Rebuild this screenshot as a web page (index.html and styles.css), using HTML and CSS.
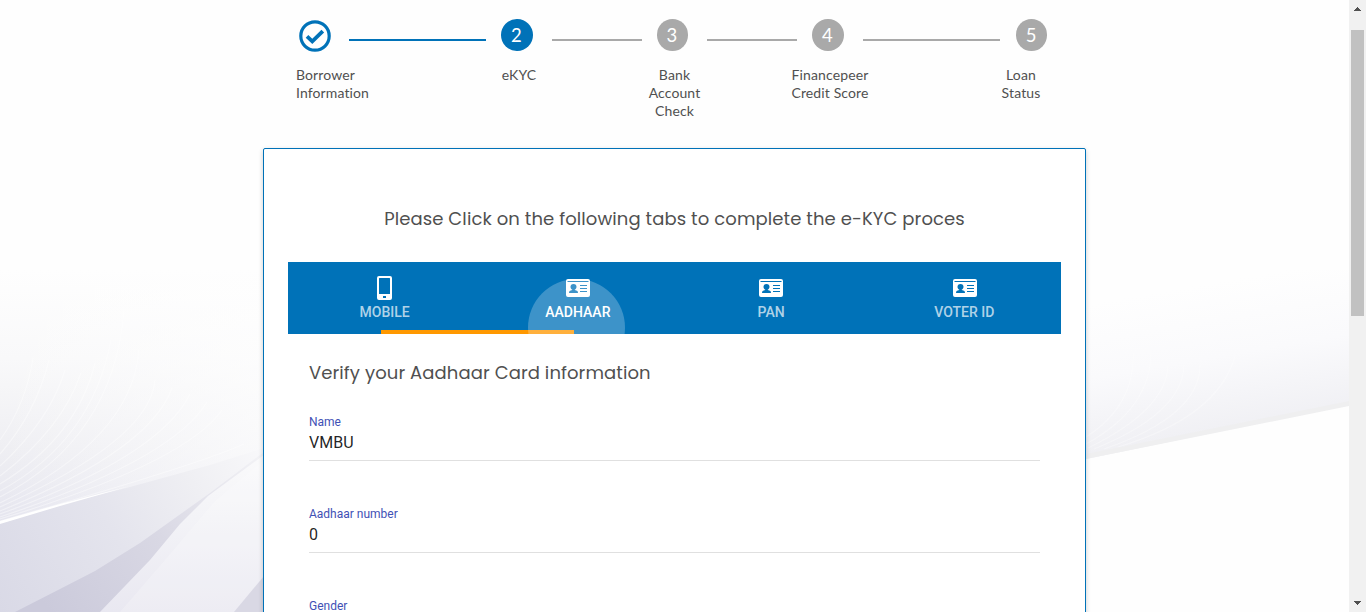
FILE: index.html
```
<!DOCTYPE html>
<html lang="en">
<head>
<meta charset="utf-8">
<title>e-KYC</title>
<link rel="stylesheet" href="styles.css">
</head>
<body>
<div class="page">
  <svg class="backdrop" viewBox="0 0 1349 612" preserveAspectRatio="none" aria-hidden="true">
    <defs>
      <linearGradient id="mist" x1="0" y1="0" x2="0" y2="1"><stop offset="0" stop-color="#fefefe"/><stop offset=".35" stop-color="#f9f9fa"/><stop offset=".7" stop-color="#efeff3"/><stop offset="1" stop-color="#e5e5ef"/></linearGradient>
      <linearGradient id="fade" x1="0" y1="0" x2="1" y2="0"><stop offset="0" stop-color="#fefefe" stop-opacity="0"/><stop offset="1" stop-color="#fefefe" stop-opacity=".7"/></linearGradient>
      <linearGradient id="facet" gradientUnits="userSpaceOnUse" x1="0" y1="612" x2="262" y2="450"><stop offset="0" stop-color="#d9d9e6"/><stop offset=".45" stop-color="#e4e4ed"/><stop offset=".75" stop-color="#efeff3"/><stop offset="1" stop-color="#f8f8fa"/></linearGradient>
      <linearGradient id="blade" gradientUnits="userSpaceOnUse" x1="50" y1="612" x2="264" y2="452"><stop offset="0" stop-color="#cbcadb"/><stop offset=".5" stop-color="#d9d8e4"/><stop offset="1" stop-color="#f3f3f6"/></linearGradient>
      <linearGradient id="pale" x1="0" y1="1" x2="0" y2="0"><stop offset="0" stop-color="#e9e8f1"/><stop offset=".6" stop-color="#f3f3f7"/><stop offset="1" stop-color="#fafafb"/></linearGradient>
      <linearGradient id="right" gradientUnits="userSpaceOnUse" x1="1200" y1="285" x2="1225" y2="430"><stop offset="0" stop-color="#fefefe"/><stop offset=".5" stop-color="#fafafc"/><stop offset="1" stop-color="#f0f0f4"/></linearGradient>
    </defs>
    <path d="M0 270H264V455L0 523Z" fill="url(#mist)"/>
    <path d="M0 270H264V455L0 523Z" fill="url(#fade)"/>
    <g class="mesh">
      <path d="M0 440Q26 404 33 358M0 454Q36 413 49 360M0 466Q50 420 65 370M0 476Q62 429 81 373M0 484Q77 437 95 363M0 491Q92 441 111 340M0 497Q114 438 124 310M0 503Q132 439 139 350M0 507Q150 440 155 380M0 511Q150 450 172 388M0 514Q160 456 190 394M0 517Q173 459 207 402M0 519Q185 463 222 410M0 521Q195 466 244 444"/>
    </g>
    <path d="M0 523L60 505L130 487L210 465L264 448V612H0Z" fill="url(#facet)"/>
    <path d="M0 521L60 504L130 486L60 506L0 524Z" fill="#fff"/>
    <path d="M15 612L60 589L95 571L140 543L210 493L264 452V612Z" fill="url(#blade)"/>
    <path d="M100 612L150 560L180 524L208 496L264 455V612Z" fill="url(#pale)"/>
    <path d="M120 612L165 560L215 501L264 460V612Z" fill="#fff" opacity=".2"/>
    <path d="M234 612L264 576V612Z" fill="#d9d8e4"/>
    <path d="M1086 270H1349V405L1086 459Z" fill="url(#right)"/>
    <g class="mesh faint"><path d="M1086 437Q1136 405 1133 350M1086 444Q1152 408 1151 350M1088 448Q1166 410 1168 366M1094 449Q1183 413 1184 365M1104 449Q1200 416 1200 365M1118 447Q1218 417 1235 356"/></g>
    <path d="M1086 454L1349 401V406L1086 459Z" fill="#efeff0"/>
  </svg>

  <main class="content">
    <ol class="stepper">
      <li class="step done">
        <svg class="check" viewBox="0 0 32 32"><circle cx="16" cy="16" r="14.2"/><path class="tick" d="M8 16.300L13.300 21.300L23.800 11.200"/></svg>
        <span class="label">Borrower<br>Information</span>
      </li>
      <li class="link long active"></li>
      <li class="step current"><span class="dot">2</span><span class="label">eKYC</span></li>
      <li class="link"></li>
      <li class="step third"><span class="dot">3</span><span class="label">Bank<br>Account<br>Check</span></li>
      <li class="link"></li>
      <li class="step"><span class="dot">4</span><span class="label">Financepeer<br>Credit Score</span></li>
      <li class="link long"></li>
      <li class="step last"><span class="dot">5</span><span class="label">Loan<br>Status</span></li>
    </ol>

    <section class="card">
      <h1 class="heading title">Please Click on the following tabs to complete the e-KYC proces</h1>
      <nav class="tabs">
        <a class="tab"><svg class="icon" viewBox="0 0 24 24"><path fill-rule="evenodd" d="M6 0H17Q19 0 19 2V22Q19 24 17 24H6Q4 24 4 22V2Q4 0 6 0ZM6.500 2Q6 2 6 2.500V18H17V2.500Q17 2 16.500 2ZM10 20V22H13V20Z"/></svg><span>MOBILE</span></a>
        <a class="tab selected"><svg class="icon" viewBox="0 0 24 24"><use href="#id-card"/></svg><span>AADHAAR</span></a>
        <a class="tab"><svg class="icon" viewBox="0 0 24 24"><path id="id-card" fill-rule="evenodd" d="M2 3H22Q24 3 24 5V19Q24 21 22 21H2Q0 21 0 19V5Q0 3 2 3ZM1.500 5V6H22.500V5ZM7.500 8C5.500 8 4.500 9.200 4.500 10.700C4.500 12 5.200 13.200 6.200 13.600V14L4 14.700Q3 15.100 3 17H12Q12 15.100 11 14.700L8.800 14V13.600C9.800 13.200 10.500 12 10.500 10.700C10.500 9.200 9.500 8 7.500 8ZM14 9V10H21V9ZM14 12V13H21V12ZM14 15V16H21V15Z"/></svg><span>PAN</span></a>
        <a class="tab voter"><svg class="icon" viewBox="0 0 24 24"><use href="#id-card"/></svg><span>VOTER ID</span></a>
        <i class="ink"></i>
        <i class="ripple"></i>
      </nav>
      <form class="form">
        <h2 class="heading">Verify your Aadhaar Card information</h2>
        <div class="field"><span class="caption">Name</span><span class="value">VMBU</span></div>
        <div class="field"><span class="caption">Aadhaar number</span><span class="value">0</span></div>
        <div class="field"><span class="caption">Gender</span><span class="value"></span></div>
      </form>
    </section>
  </main>

  <aside class="scrollbar">
    <svg class="arrow" viewBox="0 0 17 17" shape-rendering="crispEdges"><path d="M5 11V10H6V9H7V8H8V7H9V8H10V9H11V10H12V11Z"/></svg>
    <div class="thumb"></div>
    <svg class="arrow bottom" viewBox="0 0 17 17" shape-rendering="crispEdges"><path d="M5 6V7H6V8H7V9H8V10H9V9H10V8H11V7H12V6Z"/></svg>
  </aside>
</div>
</body>
</html>
```
FILE: styles.css
```
* { box-sizing: border-box; }
body { margin: 0; background: #fefefe; overflow: hidden; font-family: Roboto, sans-serif; }
.page { position: relative; display: flex; height: 612px; overflow: hidden; }
.backdrop { position: absolute; left: 0; top: 0; width: 1349px; height: 612px; }
.mesh { fill: none; stroke: #fff; stroke-width: 1.2; opacity: .4; }
.mesh.faint { opacity: .3; }
.content { position: relative; width: 1349px; height: 612px; }

.stepper { list-style: none; display: flex; height: 148px; margin: 0; padding: 19px 0 0 296px; }
.step { display: flex; flex-direction: column; align-items: center; flex: none; width: 66px; }
.step.third { width: 65px; }
.step.done { width: 53px; align-items: flex-start; }
.step.last { width: 42px; }
.dot { flex: none; width: 31.5px; height: 32px; margin-right: 4.5px; padding-right: 1px; border-radius: 50%; background: #a9a9a9; color: #fff; font: 18.5px/33px Lato, sans-serif; text-align: center; }
.current .dot { background: #0072b8; }
.last .dot { margin: 0 0 0 21px; }
.check { width: 32px; height: 32px; margin: 1px 0 -1px 3px; fill: none; stroke: #0072b8; stroke-width: 3.2; }
.tick { stroke-width: 3.8; }
.label { margin-top: 15px; color: #505050; font: 14px/18px Lato, sans-serif; letter-spacing: .12px; text-align: center; white-space: nowrap; }
.done .label { text-align: left; }
.link { flex: none; width: 90px; height: 2px; margin-top: 20px; background: #a9a9a9; }
.link.long { width: 137px; }
.link.active { background: #0072b8; }

.card { width: 823px; height: 700px; margin-left: 263px; padding: 55px 24px 0; border: 1px solid #0072b8; border-radius: 2px; background: #fff; box-shadow: 0 2px 5px rgba(0,0,0,.2); }
.heading { margin: 0; color: #505050; font: 400 18px/30px Poppins, Inter, sans-serif; letter-spacing: .09px; white-space: nowrap; }
.title { text-align: center; }
.tabs { position: relative; display: grid; grid-template-columns: repeat(4, 1fr); height: 72px; margin-top: 28px; overflow: hidden; background: #0072b8; }
.tab { display: flex; flex-direction: column; align-items: center; padding-top: 14px; color: rgba(255,255,255,.7); font: 500 14px/24px Roboto, sans-serif; }
.tab.selected { color: #fff; }
.icon { width: 24px; height: 24px; fill: #fff; }
.voter .icon { margin-left: 1px; }
.ink { position: absolute; left: 93px; bottom: 0; width: 193px; height: 4px; background: #ff9800; }
.ripple { position: absolute; left: 240px; top: 17px; width: 97px; height: 97px; border-radius: 50%; background: rgba(255,255,255,.24); }
.form { padding: 24px 21px 0; }
.field { display: flex; flex-direction: column; height: 47px; margin-bottom: 45px; border-bottom: 1px solid #e0e0e0; }
.form .heading { margin-bottom: 26px; }
.caption { color: #3f51b5; font-size: 12px; line-height: 16px; }
.value { margin-top: 1px; color: rgba(0,0,0,.87); font-size: 16px; line-height: 24px; }

.scrollbar { position: relative; display: flex; flex-direction: column; width: 17px; height: 612px; background: #f1f1f1; }
.arrow { width: 17px; height: 17px; fill: #505050; }
.thumb { width: 13px; height: 286px; margin: 13px 2px 0; background: #c1c1c1; }
.arrow.bottom { margin-top: auto; }
```
